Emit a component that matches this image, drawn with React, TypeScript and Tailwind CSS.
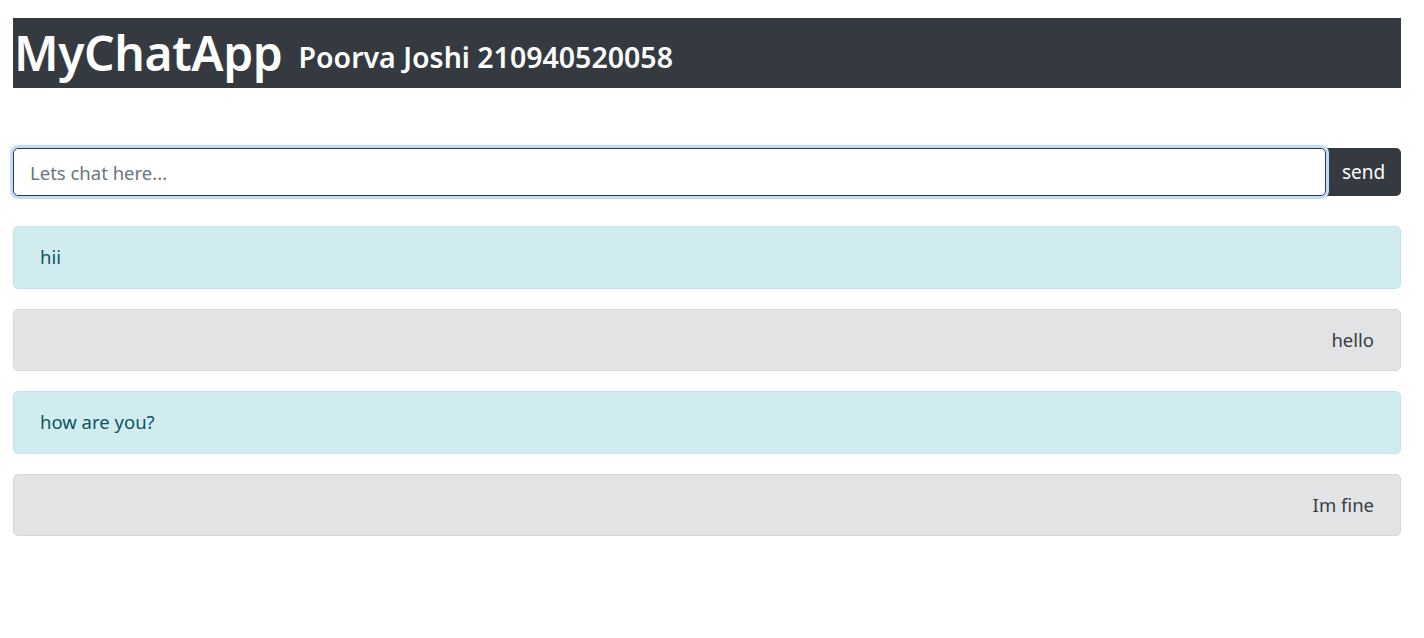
import React from 'react';

const messages = [
  { text: "hii", mine: false },
  { text: "hello", mine: true },
  { text: "how are you?", mine: false },
  { text: "Im fine", mine: true }
];

const App = () => {
  return (
    <div className="min-h-screen bg-white pt-[18px] pl-[13px] font-['Noto_Sans',sans-serif]">
      <div className="w-[1388px]">
        {/* Header */}
        <div className="h-[70px] bg-[#343a40] text-white flex items-center">
          <h1 className="text-[48px] font-semibold leading-none pl-[1px] tracking-[-0.4px]">MyChatApp</h1>
          <span className="ml-[16px] mt-[9px] text-[28.5px] font-semibold leading-none">Poorva Joshi 210940520058</span>
        </div>

        {/* Input */}
        <div className="mt-[60px] flex">
          <input
            type="text"
            placeholder="Lets chat here..."
            className="relative z-10 flex-1 h-[48px] px-[16px] text-[18.5px] text-[#495057] placeholder:text-[#6c757d] border border-[#343a40] rounded-[5px] outline-none shadow-[0_0_0_3px_#bfdeff]"
          />
          <button className="h-[48px] w-[75px] bg-[#343a40] text-white text-[19px] rounded-r-[5px]">send</button>
        </div>

        {/* Messages */}
        <div className="mt-[30px] flex flex-col gap-[20px]">
          {messages.map((m, index) => (
            <div
              key={index}
              className={
                m.mine
                  ? "h-[62.5px] flex items-center justify-end px-[26px] rounded-[5px] border border-[#d6d8db] bg-[#e2e3e5] text-[#383d41] text-[18.5px]"
                  : "h-[62.5px] flex items-center px-[26px] rounded-[5px] border border-[#bee5eb] bg-[#d1ecf1] text-[#0c5460] text-[18.5px]"
              }
            >
              {m.text}
            </div>
          ))}
        </div>
      </div>
    </div>
  );
};

export default App;
